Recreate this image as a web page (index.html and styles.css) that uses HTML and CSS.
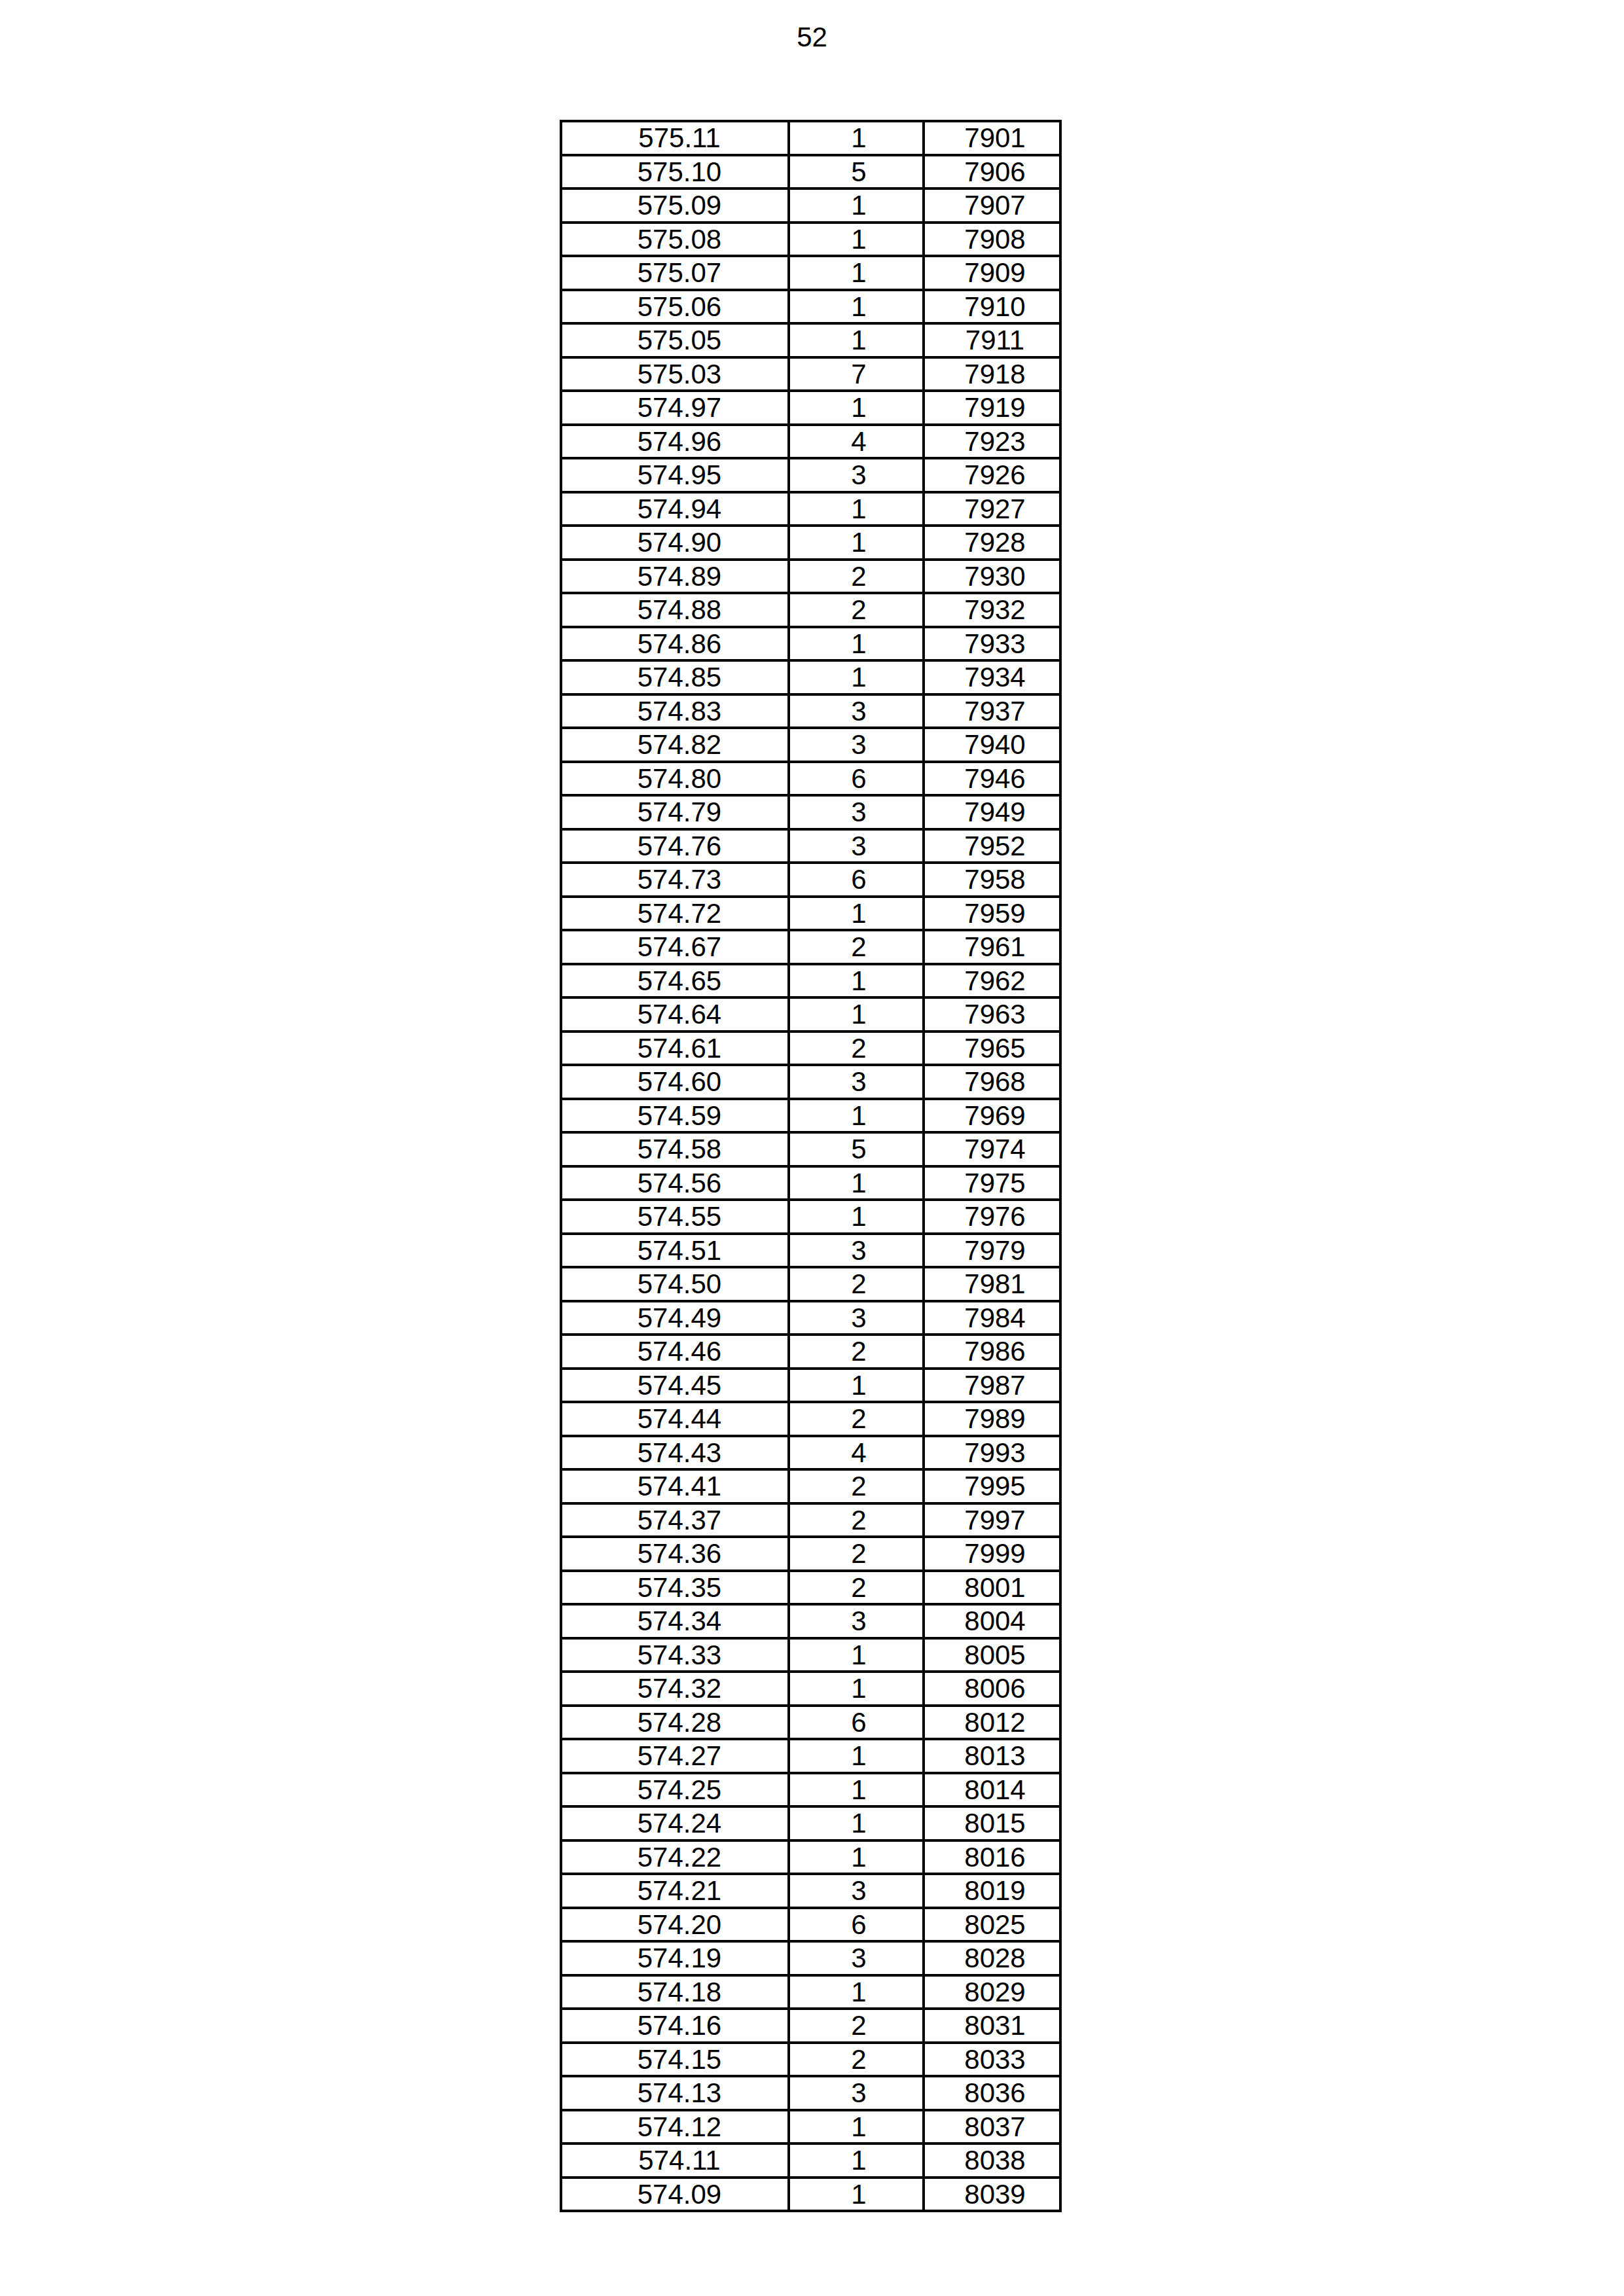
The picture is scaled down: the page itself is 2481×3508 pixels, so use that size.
FILE: index.html
```html
<!DOCTYPE html>
<html>
<head>
<meta charset="utf-8">
<link rel="stylesheet" href="styles.css">
</head>
<body>
<div class="page-no">52</div>
<table class="data">
<tbody>
<tr><td class="c1">575.11</td><td class="c2">1</td><td class="c3">7901</td></tr>
<tr><td class="c1">575.10</td><td class="c2">5</td><td class="c3">7906</td></tr>
<tr><td class="c1">575.09</td><td class="c2">1</td><td class="c3">7907</td></tr>
<tr><td class="c1">575.08</td><td class="c2">1</td><td class="c3">7908</td></tr>
<tr><td class="c1">575.07</td><td class="c2">1</td><td class="c3">7909</td></tr>
<tr><td class="c1">575.06</td><td class="c2">1</td><td class="c3">7910</td></tr>
<tr><td class="c1">575.05</td><td class="c2">1</td><td class="c3">7911</td></tr>
<tr><td class="c1">575.03</td><td class="c2">7</td><td class="c3">7918</td></tr>
<tr><td class="c1">574.97</td><td class="c2">1</td><td class="c3">7919</td></tr>
<tr><td class="c1">574.96</td><td class="c2">4</td><td class="c3">7923</td></tr>
<tr><td class="c1">574.95</td><td class="c2">3</td><td class="c3">7926</td></tr>
<tr><td class="c1">574.94</td><td class="c2">1</td><td class="c3">7927</td></tr>
<tr><td class="c1">574.90</td><td class="c2">1</td><td class="c3">7928</td></tr>
<tr><td class="c1">574.89</td><td class="c2">2</td><td class="c3">7930</td></tr>
<tr><td class="c1">574.88</td><td class="c2">2</td><td class="c3">7932</td></tr>
<tr><td class="c1">574.86</td><td class="c2">1</td><td class="c3">7933</td></tr>
<tr><td class="c1">574.85</td><td class="c2">1</td><td class="c3">7934</td></tr>
<tr><td class="c1">574.83</td><td class="c2">3</td><td class="c3">7937</td></tr>
<tr><td class="c1">574.82</td><td class="c2">3</td><td class="c3">7940</td></tr>
<tr><td class="c1">574.80</td><td class="c2">6</td><td class="c3">7946</td></tr>
<tr><td class="c1">574.79</td><td class="c2">3</td><td class="c3">7949</td></tr>
<tr><td class="c1">574.76</td><td class="c2">3</td><td class="c3">7952</td></tr>
<tr><td class="c1">574.73</td><td class="c2">6</td><td class="c3">7958</td></tr>
<tr><td class="c1">574.72</td><td class="c2">1</td><td class="c3">7959</td></tr>
<tr><td class="c1">574.67</td><td class="c2">2</td><td class="c3">7961</td></tr>
<tr><td class="c1">574.65</td><td class="c2">1</td><td class="c3">7962</td></tr>
<tr><td class="c1">574.64</td><td class="c2">1</td><td class="c3">7963</td></tr>
<tr><td class="c1">574.61</td><td class="c2">2</td><td class="c3">7965</td></tr>
<tr><td class="c1">574.60</td><td class="c2">3</td><td class="c3">7968</td></tr>
<tr><td class="c1">574.59</td><td class="c2">1</td><td class="c3">7969</td></tr>
<tr><td class="c1">574.58</td><td class="c2">5</td><td class="c3">7974</td></tr>
<tr><td class="c1">574.56</td><td class="c2">1</td><td class="c3">7975</td></tr>
<tr><td class="c1">574.55</td><td class="c2">1</td><td class="c3">7976</td></tr>
<tr><td class="c1">574.51</td><td class="c2">3</td><td class="c3">7979</td></tr>
<tr><td class="c1">574.50</td><td class="c2">2</td><td class="c3">7981</td></tr>
<tr><td class="c1">574.49</td><td class="c2">3</td><td class="c3">7984</td></tr>
<tr><td class="c1">574.46</td><td class="c2">2</td><td class="c3">7986</td></tr>
<tr><td class="c1">574.45</td><td class="c2">1</td><td class="c3">7987</td></tr>
<tr><td class="c1">574.44</td><td class="c2">2</td><td class="c3">7989</td></tr>
<tr><td class="c1">574.43</td><td class="c2">4</td><td class="c3">7993</td></tr>
<tr><td class="c1">574.41</td><td class="c2">2</td><td class="c3">7995</td></tr>
<tr><td class="c1">574.37</td><td class="c2">2</td><td class="c3">7997</td></tr>
<tr><td class="c1">574.36</td><td class="c2">2</td><td class="c3">7999</td></tr>
<tr><td class="c1">574.35</td><td class="c2">2</td><td class="c3">8001</td></tr>
<tr><td class="c1">574.34</td><td class="c2">3</td><td class="c3">8004</td></tr>
<tr><td class="c1">574.33</td><td class="c2">1</td><td class="c3">8005</td></tr>
<tr><td class="c1">574.32</td><td class="c2">1</td><td class="c3">8006</td></tr>
<tr><td class="c1">574.28</td><td class="c2">6</td><td class="c3">8012</td></tr>
<tr><td class="c1">574.27</td><td class="c2">1</td><td class="c3">8013</td></tr>
<tr><td class="c1">574.25</td><td class="c2">1</td><td class="c3">8014</td></tr>
<tr><td class="c1">574.24</td><td class="c2">1</td><td class="c3">8015</td></tr>
<tr><td class="c1">574.22</td><td class="c2">1</td><td class="c3">8016</td></tr>
<tr><td class="c1">574.21</td><td class="c2">3</td><td class="c3">8019</td></tr>
<tr><td class="c1">574.20</td><td class="c2">6</td><td class="c3">8025</td></tr>
<tr><td class="c1">574.19</td><td class="c2">3</td><td class="c3">8028</td></tr>
<tr><td class="c1">574.18</td><td class="c2">1</td><td class="c3">8029</td></tr>
<tr><td class="c1">574.16</td><td class="c2">2</td><td class="c3">8031</td></tr>
<tr><td class="c1">574.15</td><td class="c2">2</td><td class="c3">8033</td></tr>
<tr><td class="c1">574.13</td><td class="c2">3</td><td class="c3">8036</td></tr>
<tr><td class="c1">574.12</td><td class="c2">1</td><td class="c3">8037</td></tr>
<tr><td class="c1">574.11</td><td class="c2">1</td><td class="c3">8038</td></tr>
<tr><td class="c1">574.09</td><td class="c2">1</td><td class="c3">8039</td></tr>
</tbody>
</table>
</body>
</html>
```
FILE: styles.css
```css
html, body {
  margin: 0;
  padding: 0;
  background: #ffffff;
}
body {
  width: 2481px;
  min-height: 3508px;
  font-family: "Liberation Sans", Arial, sans-serif;
  color: #000000;
}
.page-no {
  margin-top: 33px;
  height: 48px;
  font-size: 42px;
  line-height: 48px;
  text-align: center;
}
.data {
  margin-top: 102px;
  margin-left: 855px;
  border-collapse: separate;
  border-spacing: 0;
  border-left: 4px solid #000;
  border-top: 4px solid #000;
  table-layout: fixed;
}
.data td {
  box-sizing: border-box;
  height: 51.5px;
  padding: 0;
  border-right: 4px solid #000;
  border-bottom: 4px solid #000;
  font-size: 42px;
  line-height: 47px;
  text-align: center;
  vertical-align: middle;
  white-space: nowrap;
}
.data td.c1 {
  width: 348px;
  padding-left: 14px;
}
.data td.c2 {
  width: 206px;
  padding-left: 8px;
}
.data td.c3 {
  width: 209px;
  padding-left: 9px;
}
```
